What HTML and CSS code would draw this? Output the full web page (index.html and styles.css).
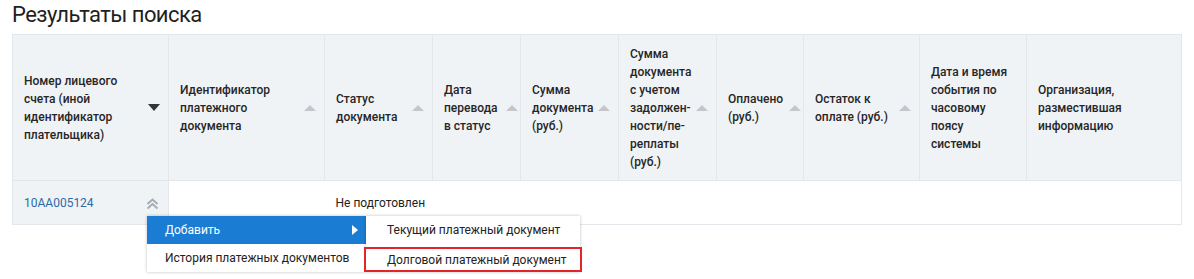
FILE: index.html
```html
<!DOCTYPE html>
<html lang="ru">
<head>
<meta charset="utf-8">
<link rel="stylesheet" href="styles.css">
</head>
<body>
<div class="page">
  <h1 class="title">Результаты поиска</h1>
  <div class="results">
    <table class="grid">
      <colgroup>
        <col style="width:156px"><col style="width:156px"><col style="width:108px"><col style="width:88px"><col style="width:98px"><col style="width:98px"><col style="width:87px"><col style="width:116px"><col style="width:107px"><col style="width:155px">
      </colgroup>
      <thead>
        <tr>
          <th><div class="th"><span class="th__text">Номер лицевого счета (иной идентификатор плательщика)</span><span class="sort sort--active"></span></div></th>
          <th><div class="th"><span class="th__text">Идентификатор платежного документа</span><span class="sort"></span></div></th>
          <th><div class="th"><span class="th__text">Статус документа</span><span class="sort"></span></div></th>
          <th><div class="th th--tight"><span class="th__text">Дата перевода в статус</span><span class="sort"></span></div></th>
          <th><div class="th"><span class="th__text">Сумма документа (руб.)</span><span class="sort"></span></div></th>
          <th><div class="th"><span class="th__text">Сумма документа с учетом задолжен-ности/пе-реплаты (руб.)</span><span class="sort"></span></div></th>
          <th><div class="th th--tight"><span class="th__text">Оплачено (руб.)</span><span class="sort"></span></div></th>
          <th><div class="th"><span class="th__text">Остаток к оплате (руб.)</span><span class="sort"></span></div></th>
          <th><div class="th th--nosort"><span class="th__text">Дата и время события по часовому поясу системы</span></div></th>
          <th><div class="th th--nosort"><span class="th__text">Организация, разместившая информацию</span></div></th>
        </tr>
      </thead>
      <tbody>
        <tr>
          <td class="cell-key"><div class="key"><a class="link" href="#">10AA005124</a><svg class="chevrons" width="13" height="12" viewBox="0 0 13 12"><path d="M1.5 6 L6.5 1.5 L11.5 6 M1.5 10.5 L6.5 6 L11.5 10.5" fill="none" stroke="#a4acb5" stroke-width="2"/></svg></div></td>
          <td></td>
          <td>Не подготовлен</td>
          <td></td><td></td><td></td><td></td><td></td><td></td><td class="cell-last"></td>
        </tr>
      </tbody>
    </table>
    <div class="menu">
      <ul class="menu__list menu__list--main">
        <li class="menu__item menu__item--active">Добавить<span class="menu__arrow"></span></li>
        <li class="menu__item">История платежных документов</li>
      </ul>
      <ul class="menu__list menu__list--sub">
        <li class="menu__item menu__item--sub">Текущий платежный документ</li>
        <li class="menu__item menu__item--sub menu__item--marked">Долговой платежный документ</li>
      </ul>
    </div>
  </div>
</div>
</body>
</html>
```
FILE: styles.css
```css
html, body {
  margin: 0;
  padding: 0;
  background: #fff;
}
.page {
  box-sizing: border-box;
  min-height: 279px;
  padding: 0 12px;
  font-family: Roboto, "Liberation Sans", Arial, sans-serif;
  color: #222;
}
.title {
  margin: 0;
  font-size: 22px;
  font-weight: 400;
  letter-spacing: -0.55px;
  line-height: 30px;
  color: #1f1f1f;
}
.results {
  position: relative;
  margin-top: 4px;
  width: 1170px;
}
.grid {
  border-collapse: collapse;
  table-layout: fixed;
  width: 1170px;
}
.grid th, .grid td {
  border: 1px solid #e3e7eb;
  padding: 0;
}
.grid td {
  border-left: none;
  border-right: none;
}
.grid td.cell-key {
  border-right: 1px solid #e3e7eb;
  border-left: 1px solid #e3e7eb;
}
.grid td.cell-last {
  border-right: 1px solid #e3e7eb;
}
.grid th {
  background: #f0f3f6;
  height: 145px;
  vertical-align: middle;
  text-align: left;
}
.th {
  display: flex;
  align-items: center;
  padding: 0 8px 0 11px;
  font-size: 12px;
  font-weight: 500;
  line-height: 18px;
  color: #262626;
}
.th--tight {
  padding-right: 2px;
}
.th--nosort {
  padding-right: 16px;
}
.th__text {
  flex: 1 1 auto;
  min-width: 0;
}
.sort {
  flex: none;
  width: 0;
  height: 0;
  margin-left: 5px;
  border-left: 6px solid transparent;
  border-right: 6px solid transparent;
  border-bottom: 6px solid #c3c7cb;
}
.sort--active {
  border-bottom: none;
  border-top: 7px solid #333;
}
.grid td {
  height: 43px;
  font-size: 12px;
  color: #222;
  padding-left: 11px;
  vertical-align: middle;
}
.grid td.cell-key {
  background: #f0f3f6;
  padding-right: 8px;
}
.key {
  display: flex;
  align-items: center;
  justify-content: space-between;
}
.link {
  color: #2b6aa6;
  text-decoration: none;
}
.chevrons {
  display: block;
  margin-top: 2px;
  margin-right: 1px;
}
.menu {
  position: absolute;
  left: 135px;
  top: 182px;
  display: flex;
  align-items: flex-start;
  font-size: 12px;
  color: #222;
}
.menu__list {
  list-style: none;
  margin: 0;
  padding: 0;
  background: #fff;
  box-shadow: 0 0 3px rgba(0, 0, 0, 0.25);
}
.menu__list--main {
  width: 219px;
}
.menu__list--sub {
  width: 214px;
}
.menu__item {
  display: flex;
  align-items: center;
  height: 28px;
  padding: 0 12px 0 18px;
  white-space: nowrap;
}
.menu__item--active {
  background: #1a7dd3;
  color: #fff;
  justify-content: space-between;
}
.menu__arrow {
  width: 0;
  height: 0;
  border-top: 5px solid transparent;
  border-bottom: 5px solid transparent;
  border-left: 6px solid #fff;
  margin-right: -4px;
}
.menu__item--sub {
  padding-left: 21px;
}
.menu__item--marked {
  margin: 3px -2px 0;
  height: 21px;
  border: 2px solid #e3242b;
}
```
